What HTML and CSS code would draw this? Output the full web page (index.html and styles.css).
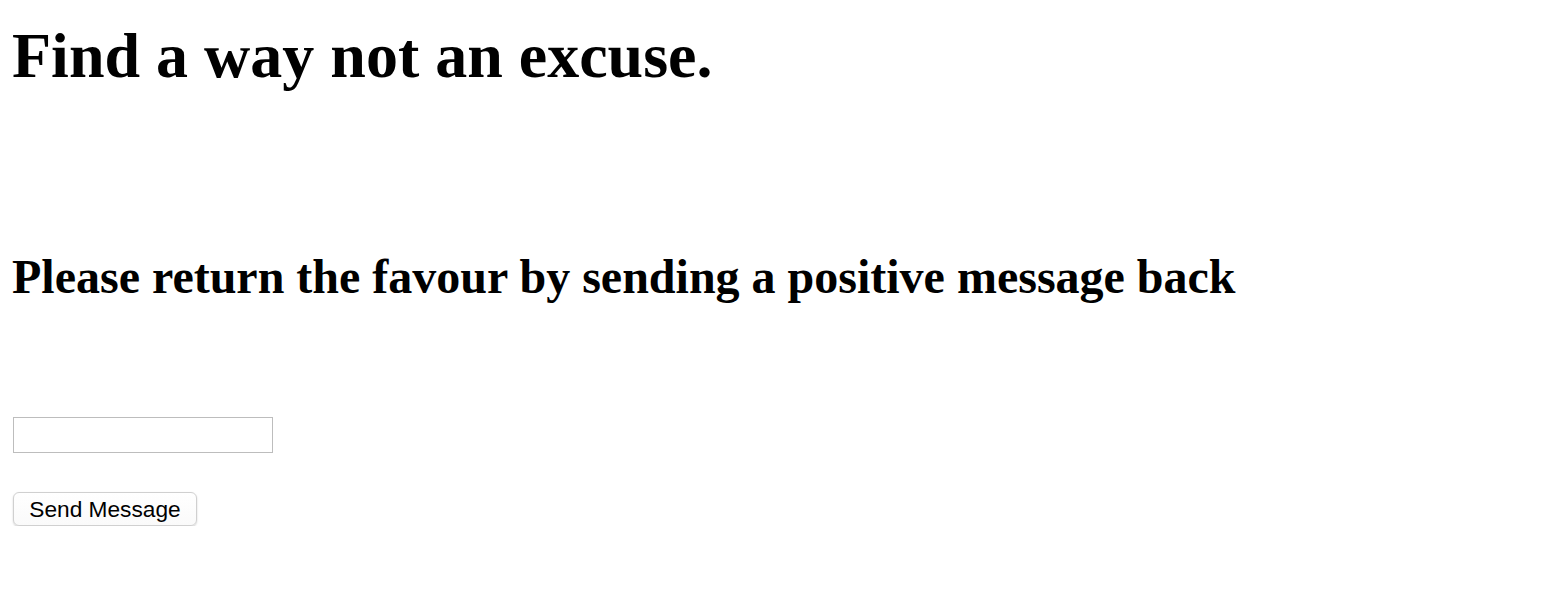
FILE: index.html
```html
<!DOCTYPE html>
<html>
<head>
<meta charset="utf-8">
<link rel="stylesheet" href="styles.css">
</head>
<body>
<main class="page">
  <h1 class="title">Find a way not an excuse.</h1>
  <h2 class="subtitle">Please return the favour by sending a positive message back</h2>
  <form class="form">
    <input class="field" type="text">
    <button class="send" type="button">Send Message</button>
  </form>
</main>
</body>
</html>
```

FILE: styles.css
```css
html, body {
  margin: 0;
  padding: 0;
  background: #ffffff;
}
.page {
  padding: 0 12px;
  font-family: "Liberation Serif", "Times New Roman", serif;
  color: #000;
}
.title {
  margin: 20px 0 0 0;
  font-size: 64px;
  font-weight: bold;
  line-height: 71px;
}
.subtitle {
  margin: 159px 0 0 0;
  font-size: 48px;
  font-weight: bold;
  line-height: 53px;
}
.form {
  margin-top: 114px;
  display: flex;
  flex-direction: column;
  align-items: flex-start;
  gap: 39px;
}
.field {
  box-sizing: border-box;
  width: 260px;
  height: 36px;
  margin: 0 0 0 1px;
  border: 1px solid #bdbdbd;
  background: #fff;
  padding: 0 4px;
  font-family: "Liberation Sans", Arial, sans-serif;
  font-size: 16px;
  outline: none;
}
.send {
  box-sizing: border-box;
  width: 184px;
  height: 34px;
  margin: 0 0 0 1px;
  padding: 1px 0 0 0;
  border: 1px solid #d0d0d0;
  border-radius: 6px;
  background: linear-gradient(#ffffff, #fafafa);
  box-shadow: 0 1px 2px rgba(0,0,0,0.18);
  font-family: "Liberation Sans", Arial, sans-serif;
  font-size: 22.7px;
  color: #000;
  line-height: 31px;
}
```
